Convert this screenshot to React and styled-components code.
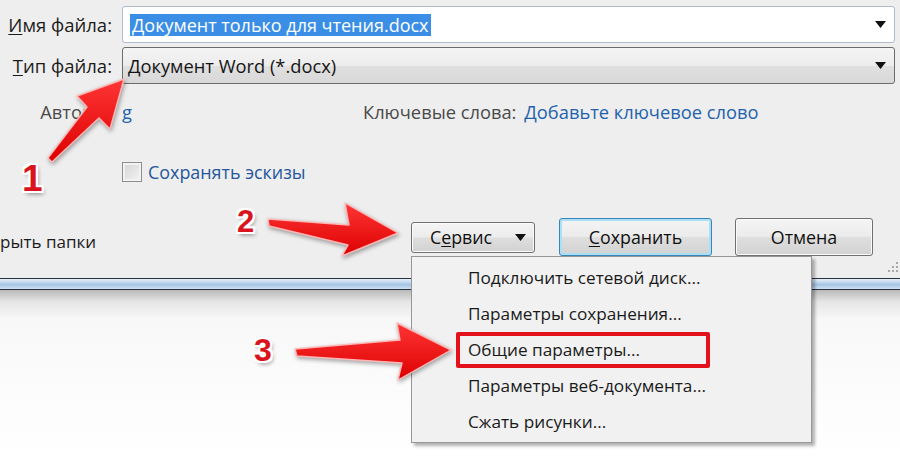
import React from "react";
import styled, { createGlobalStyle, css } from "styled-components";

const menuItems = [
  "Подключить сетевой диск...",
  "Параметры сохранения...",
  "Общие параметры...",
  "Параметры веб-документа...",
  "Сжать рисунки...",
];

const arrows = [
  "48,158 87,107 77,96 124,79 110,129 99,118 52,162",
  "268,219 349,225 345,203 398,233 342,256 348,245 269,226",
  "295,349 400,340 397,323 451,350 398,380 402,363 297,356",
];

const App = () => {
  return (
    <Page>
      <GlobalStyle />
      <Dialog>
        <FieldGrid>
          <Label>
            <Key>И</Key>мя файла:
          </Label>
          <TextBox>
            <Selected>Документ только для чтения.docx</Selected>
            <DropArrow />
          </TextBox>
          <Label>
            <Key>Т</Key>ип файла:
          </Label>
          <ComboBox>
            <ComboText>Документ Word (*.docx)</ComboText>
            <DropArrow />
          </ComboBox>
        </FieldGrid>

        <MetaRow>
          <MetaLabel>Авторы:</MetaLabel>
          <MetaValue>g</MetaValue>
          <MetaKey>Ключевые слова:</MetaKey>
          <MetaLink>Добавьте ключевое слово</MetaLink>
        </MetaRow>

        <CheckRow>
          <CheckBox />
          <CheckText>Сохранять эскизы</CheckText>
        </CheckRow>

        <Footer>
          <HideFolders>рыть папки</HideFolders>
          <Buttons>
            <ServiceWrap>
              <ServiceButton>
                С<Key>е</Key>рвис
                <DropArrow />
              </ServiceButton>
              <Menu>
                {menuItems.map((item, i) => (
                  <MenuItem key={item} $marked={i === 2}>
                    {item}
                  </MenuItem>
                ))}
              </Menu>
            </ServiceWrap>
            <Button $default>
              <Key>С</Key>охранить
            </Button>
            <Button>Отмена</Button>
          </Buttons>
        </Footer>
        <Grip />
      </Dialog>
      <WindowEdge />
      <Backdrop />

      <Annotations>
        <ArrowLayer width="900" height="458" viewBox="0 0 900 458">
          <defs>
            <linearGradient id="redFill" x1="0" y1="0" x2="0" y2="1">
              <stop offset="0" stopColor="#ff3535" />
              <stop offset="1" stopColor="#dc0000" />
            </linearGradient>
          </defs>
          {arrows.map((points) => (
            <polygon
              key={points}
              points={points}
              fill="url(#redFill)"
              stroke="#ffb8b8"
              strokeWidth="1.4"
              strokeLinejoin="round"
            />
          ))}
        </ArrowLayer>
        <Step $x={22} $y={160} $size={37}>
          1
        </Step>
        <Step $x={237} $y={206} $size={31}>
          2
        </Step>
        <Step $x={254} $y={334} $size={32}>
          3
        </Step>
      </Annotations>
    </Page>
  );
};

export default App;

const DropArrow = () => (
  <ArrowIcon width="11" height="7" viewBox="0 0 11 7">
    <path d="M0 0h11L5.5 7z" fill="#111" />
  </ArrowIcon>
);

const Grip = () => (
  <GripIcon width="12" height="12" viewBox="0 0 12 12">
    {[
      [10, 2],
      [10, 6],
      [6, 6],
      [10, 10],
      [6, 10],
      [2, 10],
    ].map(([x, y]) => (
      <rect key={`${x}-${y}`} x={x} y={y} width="2" height="2" fill="#a8a8a8" />
    ))}
  </GripIcon>
);

const GlobalStyle = createGlobalStyle`
  html, body {
    margin: 0;
    padding: 0;
    background: #fff;
  }
  body {
    font-family: "Open Sans", "Noto Sans", sans-serif;
  }
`;

const Page = styled.div`
  position: relative;
  width: 900px;
  height: 458px;
  overflow: hidden;
  display: flex;
  flex-direction: column;
  background: #fff;
`;

const Dialog = styled.div`
  position: relative;
  height: 278px;
  box-sizing: border-box;
  padding-top: 6px;
  display: flex;
  flex-direction: column;
  background: #eeeeee;
`;

const FieldGrid = styled.div`
  display: grid;
  grid-template-columns: 112px 1fr;
  column-gap: 10px;
  row-gap: 4px;
  align-items: center;
  padding-right: 5px;
`;

const Label = styled.label`
  text-align: right;
  font-size: 18.5px;
  color: #1b1b1b;
  white-space: nowrap;
`;

const Key = styled.span`
  text-decoration: underline;
  text-underline-offset: 2px;
`;

const TextBox = styled.div`
  height: 37px;
  box-sizing: border-box;
  display: flex;
  align-items: center;
  padding: 0 8px 0 7px;
  border: 1px solid #aebccb;
  border-radius: 3px;
  background: #fff;
`;

const Selected = styled.span`
  padding: 0 2px;
  font-size: 18px;
  line-height: 22px;
  color: #fff;
  background: #3a8ee6;
  white-space: nowrap;
`;

const ComboBox = styled(TextBox)`
  padding-left: 5px;
  border-color: #6c6c6c;
  background: linear-gradient(#f4f4f4, #ececec 50%, #e0e0e0 51%, #d8d8d8);
`;

const ComboText = styled.span`
  font-size: 18.3px;
  color: #151515;
  white-space: nowrap;
`;

const ArrowIcon = styled.svg`
  flex: none;
  margin-left: auto;
`;

const MetaRow = styled.div`
  display: flex;
  align-items: center;
  height: 22px;
  margin-top: 16px;
  font-size: 18.3px;
  white-space: nowrap;
`;

const MetaLabel = styled.span`
  flex: none;
  width: 112px;
  text-align: right;
  color: #4a4a4a;
`;

const MetaValue = styled.span`
  flex: none;
  width: 231px;
  margin-left: 10px;
  color: #2262ad;
`;

const MetaKey = styled.span`
  margin-left: 10px;
  color: #4a4a4a;
`;

const MetaLink = styled.span`
  margin-left: 8px;
  color: #2262ad;
`;

const CheckRow = styled.div`
  display: flex;
  align-items: center;
  gap: 6px;
  height: 25px;
  margin-top: 37px;
  padding-left: 122px;
`;

const CheckBox = styled.span`
  width: 20px;
  height: 20px;
  box-sizing: border-box;
  border: 1px solid #8e8f8f;
  background: linear-gradient(135deg, #d4d4d4, #f4f4f4);
  box-shadow: inset 0 0 0 2px #f2f2f2;
`;

const CheckText = styled.span`
  font-size: 17.9px;
  color: #24579c;
`;

const Footer = styled.div`
  display: flex;
  align-items: center;
  justify-content: space-between;
  height: 38px;
  margin-top: 34px;
  padding-right: 27px;
`;

const HideFolders = styled.span`
  padding-top: 9px;
  font-size: 17px;
  color: #1b1b1b;
`;

const Buttons = styled.div`
  display: flex;
  align-items: center;
  gap: 23px;
`;

const Button = styled.button`
  height: 38px;
  width: ${(p) => (p.$default ? 153 : 138)}px;
  box-sizing: border-box;
  padding: 0;
  font-family: inherit;
  font-size: 17.8px;
  color: #111;
  border: 1px solid ${(p) => (p.$default ? "#3c84b8" : "#707070")};
  border-radius: 3px;
  background: linear-gradient(#f4f4f4, #ececec 48%, #dedede 52%, #d2d2d2);
  box-shadow: ${(p) =>
    p.$default ? "inset 0 0 0 2px #a9e0f7" : "inset 0 0 0 1px #fafafa"};
`;

const ServiceWrap = styled.div`
  position: relative;
  margin-right: 1px;
`;

const ServiceButton = styled(Button)`
  display: flex;
  align-items: center;
  width: 124px;
  height: 31px;
  padding: 0 8px 0 18px;
`;

const Menu = styled.ul`
  position: absolute;
  z-index: 2;
  top: calc(100% + 3px);
  left: 0;
  width: 399px;
  margin: 0;
  padding: 3px 0 2px;
  list-style: none;
  border: 1px solid #979797;
  background: #f1f1f1;
  box-shadow: 3px 3px 3px rgba(0, 0, 0, 0.3);
`;

const MenuItem = styled.li`
  position: relative;
  display: flex;
  align-items: center;
  height: 36px;
  padding-left: 56px;
  font-size: 17.2px;
  color: #1a1a1a;
  white-space: nowrap;

  ${(p) =>
    p.$marked &&
    css`
      &::before {
        content: "";
        position: absolute;
        top: 0;
        left: 44px;
        width: 254px;
        height: 36px;
        box-sizing: border-box;
        border: 4px solid #e3111b;
        border-radius: 2px;
      }
    `}
`;

const GripIcon = styled.svg`
  position: absolute;
  right: 2px;
  bottom: 6px;
`;

const WindowEdge = styled.div`
  height: 12px;
  box-sizing: border-box;
  border-top: 1px solid #27313d;
  border-bottom: 1px solid #27313d;
  background: linear-gradient(#e4eef8, #b4d0ea 45%, #a4c4e4 55%, #cfe0f1);
`;

const Backdrop = styled.div`
  flex: 1;
  background: linear-gradient(#b9b9b9, #e6e6e6 12px, #f8f8f8 30px, #fff);
`;

const Annotations = styled.div`
  position: absolute;
  inset: 0;
  z-index: 5;
  pointer-events: none;
`;

const ArrowLayer = styled.svg`
  position: absolute;
  top: 0;
  left: 0;
  filter: drop-shadow(1px 2px 2px rgba(0, 0, 0, 0.35));
`;

const Step = styled.span`
  position: absolute;
  left: ${(p) => p.$x}px;
  top: ${(p) => p.$y}px;
  font-family: "Liberation Sans", Arial, sans-serif;
  font-weight: bold;
  font-size: ${(p) => p.$size}px;
  line-height: 1;
  color: #d9141d;
  text-shadow: -2px -2px 0 #fff, 2px -2px 0 #fff, -2px 2px 0 #fff,
    2px 2px 0 #fff, 0 -2px 0 #fff, 0 2px 0 #fff, -2px 0 0 #fff, 2px 0 0 #fff,
    2px 3px 4px rgba(0, 0, 0, 0.45);
`;
